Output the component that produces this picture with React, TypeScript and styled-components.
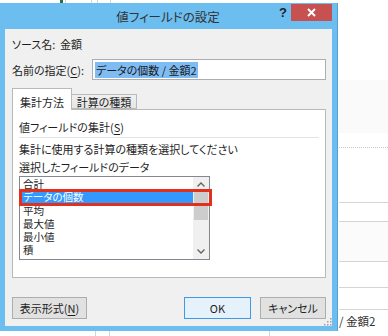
import React from 'react'
import styled, { createGlobalStyle } from 'styled-components'

const GlobalStyle = createGlobalStyle`
  html, body {
    margin: 0;
    padding: 0;
    background: #ffffff;
  }
  body {
    font-family: "Noto Sans CJK JP", "Noto Sans", sans-serif;
    font-feature-settings: "palt";
    color: #1e1e1e;
  }
`

const FIELDS = ['合計', 'データの個数', '平均', '最大値', '最小値', '積']

const App = () => {
  return (
    <>
      <GlobalStyle />
      <Sheet>
        <Strip $h={3}>
          <Seg $w={60} />
          <Seg $w={3} $bg="#217346" />
          <Seg $w={2} $line="#d4d4d4" />
          <Seg $w={25} $line="#d4d4d4" />
          <Seg $w={5} $line="#d4d4d4" />
          <Seg $w={12} $line="#d4d4d4" />
        </Strip>
        <Middle>
          <Under />
          <SideColumn>
            <Cell $h={77} />
            <Cell $h={53} $bg="#fafafa" />
            <Cell $h={15} $border="dotted" />
            <Cell $h={55} $border="solid" />
            <Cell $h={19} $border="solid" />
            <Cell $h={40} $border="solid" $bg="#fbfbfb" />
            <Cell $h={26} $border="solid" />
            <Cell $h={22} $border="solid" />
            <Cell $h={21}>
              <CellText>/ 金額2</CellText>
            </Cell>
          </SideColumn>
        </Middle>
        <Strip $h={5}>
          <Seg $w={95} $line="#d4d4d4" />
          <Seg $w={13} $line="#d4d4d4" />
          <Seg $w={159} $line="#d4d4d4" />
        </Strip>

        <Dialog>
          <TitleBar>
            <Title>値フィールドの設定</Title>
            <Controls>
              <HelpButton>?</HelpButton>
              <CloseButton>
                <svg width="9" height="9" viewBox="0 0 9 9">
                  <path d="M1 1 L8 8 M8 1 L1 8" stroke="#ffffff" strokeWidth="2" />
                </svg>
              </CloseButton>
            </Controls>
          </TitleBar>

          <Client>
            <FieldRow>
              <Label $w={48}>ソース名:</Label>
              <Text>金額</Text>
            </FieldRow>
            <NameRow>
              <Label $w={80}>
                名前の指定(<u>C</u>):
              </Label>
              <NameInput>
                <Selected>データの個数 / 金額2</Selected>
              </NameInput>
            </NameRow>

            <TabStrip>
              <Tab $active>集計方法</Tab>
              <Tab>計算の種類</Tab>
            </TabStrip>
            <Panel>
              <Text>
                値フィールドの集計(<u>S</u>)
              </Text>
              <Separator />
              <Line>集計に使用する計算の種類を選択してください</Line>
              <Line>選択したフィールドのデータ</Line>
              <ListBox>
                <Items>
                  {FIELDS.map((f, i) => (
                    <Item key={f} $selected={i === 1}>
                      {f}
                    </Item>
                  ))}
                </Items>
                <ScrollBar>
                  <Arrow>
                    <svg width="8" height="5" viewBox="0 0 8 5">
                      <path d="M0.5 4.5 L4 1 L7.5 4.5" fill="none" stroke="#606060" strokeWidth="1.3" />
                    </svg>
                  </Arrow>
                  <Thumb />
                  <Track />
                  <Arrow>
                    <svg width="8" height="5" viewBox="0 0 8 5">
                      <path d="M0.5 0.5 L4 4 L7.5 0.5" fill="none" stroke="#606060" strokeWidth="1.3" />
                    </svg>
                  </Arrow>
                </ScrollBar>
                <Marker />
              </ListBox>
            </Panel>

            <ButtonRow>
              <Button $w={75}>
                表示形式(<u>N</u>)
              </Button>
              <Spacer />
              <Button $w={67} $default>
                OK
              </Button>
              <Button $w={66}>キャンセル</Button>
            </ButtonRow>
            <Grip>
              <svg width="10" height="10" viewBox="0 0 10 10">
                {[
                  [8, 2],
                  [8, 5],
                  [5, 5],
                  [8, 8],
                  [5, 8],
                  [2, 8],
                ].map(([x, y]) => (
                  <rect key={`${x}-${y}`} x={x} y={y} width="1.5" height="1.5" fill="#a0a0a0" />
                ))}
              </svg>
            </Grip>
          </Client>
        </Dialog>
      </Sheet>
    </>
  )
}

export default App

const Sheet = styled.div`
  position: relative;
  width: 388px;
  height: 336px;
  display: flex;
  flex-direction: column;
  background: #ffffff;
  overflow: hidden;
`

const Strip = styled.div<{ $h: number }>`
  display: flex;
  height: ${(p) => p.$h}px;
  flex: none;
`

const Seg = styled.div<{ $w: number; $bg?: string; $line?: string }>`
  width: ${(p) => p.$w}px;
  height: 100%;
  background: ${(p) => p.$bg || 'transparent'};
  border-right: ${(p) => (p.$line ? `1px solid ${p.$line}` : 'none')};
  flex: none;
`

const Middle = styled.div`
  display: flex;
  flex: 1;
`

const Under = styled.div`
  width: 339px;
  flex: none;
`

const SideColumn = styled.div`
  flex: 1;
  display: flex;
  flex-direction: column;
`

const Cell = styled.div<{ $h: number; $bg?: string; $border?: string }>`
  height: ${(p) => p.$h}px;
  box-sizing: border-box;
  background: ${(p) => p.$bg || '#ffffff'};
  border-bottom: ${(p) =>
    p.$border === 'dotted'
      ? '1px dotted #c8c8c8'
      : p.$border === 'solid'
        ? '1px solid #d4d4d4'
        : 'none'};
  display: flex;
  align-items: center;
`

const CellText = styled.span`
  font-size: 11.5px;
  color: #333;
  white-space: nowrap;
`

const Dialog = styled.div`
  position: absolute;
  left: 0;
  top: 3px;
  width: 338px;
  height: 328px;
  box-sizing: border-box;
  background: #6cbdf0;
  border-right: 1px solid #5a9fcf;
  display: flex;
  flex-direction: column;
`

const TitleBar = styled.div`
  height: 26px;
  display: grid;
  flex: none;
`

const Title = styled.div`
  grid-area: 1 / 1;
  align-self: center;
  text-align: center;
  font-size: 12.5px;
  color: #333;
  padding-right: 1px;
`

const Controls = styled.div`
  grid-area: 1 / 1;
  justify-self: end;
  align-self: start;
  display: flex;
  margin-top: 1px;
  margin-right: 5px;
`

const HelpButton = styled.div`
  width: 16px;
  height: 17px;
  display: flex;
  align-items: center;
  justify-content: center;
  font-family: "Liberation Sans", sans-serif;
  font-weight: bold;
  font-size: 13px;
  color: #222;
`

const CloseButton = styled.div`
  width: 41px;
  height: 17px;
  background: #c75050;
  display: flex;
  align-items: center;
  justify-content: center;
`

const Client = styled.div`
  position: relative;
  flex: 1;
  margin: 0 5px 5px 5px;
  background: #f0f0f0;
  padding: 8px 6px 7px 7px;
  display: flex;
  flex-direction: column;
`

const Text = styled.div`
  font-size: 11px;
  line-height: 14px;
  white-space: nowrap;
  u {
    text-decoration-thickness: 1px;
    text-underline-offset: 2px;
  }
`

const Label = styled(Text)<{ $w: number }>`
  width: ${(p) => p.$w}px;
  flex: none;
`

const FieldRow = styled.div`
  display: flex;
  align-items: center;
  height: 14px;
`

const NameRow = styled.div`
  display: flex;
  align-items: center;
  height: 21px;
  margin-top: 8px;
`

const NameInput = styled.div`
  width: 234px;
  height: 21px;
  box-sizing: border-box;
  border: 1px solid #abadb3;
  background: #ffffff;
  display: flex;
  align-items: center;
  padding-left: 2px;
`

const Selected = styled.span`
  font-size: 11px;
  line-height: 16px;
  background: #7fbcf4;
  color: #1a1a1a;
  padding: 0 1px;
  white-space: nowrap;
`

const TabStrip = styled.div`
  display: flex;
  align-items: flex-end;
  height: 21px;
  margin-top: 8px;
  position: relative;
  z-index: 1;
`

const Tab = styled.div<{ $active?: boolean }>`
  box-sizing: border-box;
  height: ${(p) => (p.$active ? 22 : 15)}px;
  margin-bottom: ${(p) => (p.$active ? -1 : 0)}px;
  width: ${(p) => (p.$active ? 60 : 65)}px;
  border: 1px solid #b9b9b9;
  border-bottom: ${(p) => (p.$active ? 'none' : '1px solid #b9b9b9')};
  border-left: ${(p) => (p.$active ? '1px solid #b9b9b9' : 'none')};
  background: ${(p) => (p.$active ? '#ffffff' : 'linear-gradient(#f0f0f0, #e5e5e5)')};
  font-size: 11px;
  display: flex;
  align-items: ${(p) => (p.$active ? 'flex-start' : 'center')};
  padding-top: ${(p) => (p.$active ? 5 : 0)}px;
  justify-content: center;
  white-space: nowrap;
`

const Panel = styled.div`
  height: 169px;
  box-sizing: border-box;
  border: 1px solid #b9b9b9;
  background: #ffffff;
  padding: 10px 6px 0 6px;
  display: flex;
  flex-direction: column;
`

const Separator = styled.div`
  height: 1px;
  background: #e3e3e3;
  margin: 3px 0 4px;
`

const Line = styled(Text)`
  & + & {
    margin-top: 4px;
  }
`

const ListBox = styled.div`
  position: relative;
  width: 191px;
  height: 84px;
  box-sizing: border-box;
  margin-top: 2px;
  border: 1px solid #828790;
  display: flex;
`

const Items = styled.div`
  flex: 1;
  padding: 1px 0 0 2px;
`

const Item = styled.div<{ $selected?: boolean }>`
  height: 13.3px;
  line-height: 13.3px;
  font-family: "Liberation Sans", "Noto Sans CJK JP", sans-serif;
  font-size: 10.5px;
  padding-left: 1px;
  overflow: hidden;
  background: ${(p) => (p.$selected ? '#3399ff' : 'transparent')};
  color: ${(p) => (p.$selected ? '#ffffff' : '#1e1e1e')};
`

const ScrollBar = styled.div`
  width: 16px;
  background: #f0f0f0;
  display: flex;
  flex-direction: column;
`

const Arrow = styled.div`
  height: 15px;
  display: flex;
  align-items: center;
  justify-content: center;
  flex: none;
`

const Thumb = styled.div`
  height: 28px;
  margin: 0 1px;
  background: #cdcdcd;
  flex: none;
`

const Track = styled.div`
  flex: 1;
`

const Marker = styled.div`
  position: absolute;
  left: -1px;
  top: 12px;
  width: 193px;
  height: 17px;
  box-sizing: border-box;
  border: 3px solid #e2301d;
`

const ButtonRow = styled.div`
  display: flex;
  gap: 9px;
  margin-top: 19px;
  height: 22px;
`

const Spacer = styled.div`
  flex: 1;
`

const Button = styled.div<{ $w: number; $default?: boolean }>`
  width: ${(p) => p.$w}px;
  height: 22px;
  box-sizing: border-box;
  border: 1px solid ${(p) => (p.$default ? '#3c9ae8' : '#adadad')};
  background: ${(p) => (p.$default ? '#e5f1fb' : '#e1e1e1')};
  font-size: 11px;
  display: flex;
  align-items: center;
  justify-content: center;
  white-space: nowrap;
  u {
    text-decoration-thickness: 1px;
    text-underline-offset: 2px;
  }
`

const Grip = styled.div`
  position: absolute;
  right: 0;
  bottom: 0;
  width: 10px;
  height: 10px;
  line-height: 0;
`
